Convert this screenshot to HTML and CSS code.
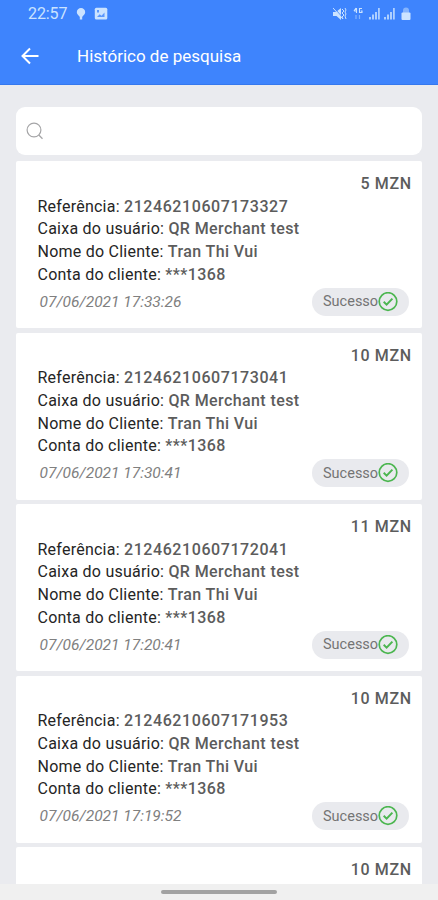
FILE: index.html
```html
<!DOCTYPE html>
<html lang="pt">
<head>
<meta charset="utf-8">
<title>Histórico de pesquisa</title>
<link rel="stylesheet" href="styles.css">
</head>
<body>
<header class="top">
  <div class="status">
    <span class="clock">22:57</span>
    <svg class="pin" width="10" height="14" viewBox="0 0 10 14"><path d="M5 1a4.200 4.200 0 0 0-4.200 4.200C.8 7.400 3.200 8.700 3.800 10v2.500h2.400V10C6.800 8.700 9.200 7.400 9.200 5.200A4.200 4.200 0 0 0 5 1z" fill="currentColor"/></svg>
    <svg class="photo" width="14" height="14" viewBox="0 0 14 14"><rect x=".8" y=".8" width="12.500" height="11.700" rx="1.500" fill="currentColor"/><path d="M3 10l2.700-2.800 1.800 1.500 3-3.200V10zM3 3h2v2.500H3z" fill="#3e84fd" opacity=".8"/></svg>
    <div class="signals">
      <svg width="74" height="14" viewBox="0 0 74 14" fill="currentColor">
        <path d="M0 5h3l5-4v12L3.500 9H0z"/>
        <path d="M1 1l10 11" stroke="#3e84fd" stroke-width="1"/>
        <path d="M0 1l10 11" stroke="currentColor" stroke-width="1"/>
        <path d="M9 2l2 2-2 2 2 2-2 2 1 2M12 1l1 2-1 2 1 2-1 2 1 3" fill="none" stroke="currentColor" stroke-width="1"/>
        <path d="M23.500 1v5M21 4h3M21 4l2-3M29 1.500h-2.500v4H29V4h-1.200" fill="none" stroke="currentColor" stroke-width="1.100"/>
        <path d="M23 8v4M26.500 8v4" stroke="currentColor" stroke-width="1.200" opacity=".5"/>
        <path d="M36 10h2v2.500h-2zM39 7.500h2v5h-2zM42 5h2v7.500h-2zM45 1h1.800v11.500H45zM51 10h2v2.500h-2zM54 7.500h2v5h-2zM57 5h2v7.500h-2zM60 1h1.800v11.500H60z" opacity=".8"/>
      </svg>
      <svg class="lock" width="10" height="14" viewBox="0 0 10 14"><path d="M2 6V3.500a3 3 0 0 1 6 0V6" fill="currentColor" opacity=".5"/><rect x=".5" y="5.500" width="9" height="7.500" rx="1" fill="currentColor"/></svg>
    </div>
  </div>
  <div class="bar">
    <svg class="back" width="20" height="18" viewBox="0 0 20 18"><path d="M18.500 9H2.500M10 1.500L2.500 9l7.500 7.500" fill="none" stroke="#fff" stroke-width="2"/></svg>
    <h1 class="title">Histórico de pesquisa</h1>
  </div>
</header>
<main class="content">
  <div class="search">
    <svg width="18" height="18" viewBox="0 0 18 18"><circle cx="8" cy="8" r="6.900" fill="none" stroke="#a5a5a7" stroke-width="1.200"/><path d="M12.800 13l3.700 3.700" stroke="#a5a5a7" stroke-width="1.300"/></svg>
  </div>
  <section class="list" id="list"></section>
</main>
<footer class="nav"><div class="handle"></div></footer>
<template id="card">
  <article class="card">
    <div class="amount"></div>
    <div class="row ref">Referência: <b></b></div>
    <div class="row box">Caixa do usuário: <b>QR Merchant test</b></div>
    <div class="row name">Nome do Cliente: <b>Tran Thi Vui</b></div>
    <div class="row account">Conta do cliente: <b>***1368</b></div>
    <div class="foot">
      <time class="date"></time>
      <span class="pill"><span class="state">Sucesso</span><svg width="20" height="20" viewBox="0 0 20 20" fill="none" stroke="#4cb650"><circle cx="10" cy="9.500" r="8.800" stroke-width="1.700"/><path d="M5.700 9.800l2.900 2.800 5.800-6" stroke-width="2"/></svg></span>
    </div>
  </article>
</template>
<script src="app.js"></script>
</body>
</html>
```
FILE: styles.css
```css
* { box-sizing: border-box; }
body {
  margin: 0;
  height: 900px;
  overflow: hidden;
  display: flex;
  flex-direction: column;
  background: #eaebef;
  font-family: Roboto, "Liberation Sans", sans-serif;
}
.top {
  flex: none;
  height: 85px;
  background: #3e84fd;
  border-bottom: 1px solid #3578ee;
  color: #fff;
}
.status {
  display: flex;
  align-items: center;
  height: 27px;
  padding: 0 27px 0 28px;
  color: #cbe3ff;
}
.clock { width: 48px; font-size: 16px; letter-spacing: -0.1px; }
.photo { margin-left: 8px; }
.signals { display: flex; margin-left: auto; }
.lock { margin-left: -6px; }
.bar { display: flex; align-items: center; height: 58px; padding-left: 20px; }
.back { margin-right: 37px; }
.title { margin: 0; font-size: 17px; font-weight: 400; line-height: 20px; }
.content { flex: 1; min-height: 0; padding: 22px 16px 0; overflow: hidden; }
.search {
  display: flex;
  align-items: center;
  height: 48px;
  margin-bottom: 6px;
  padding-left: 10px;
  border-radius: 9px;
  background: #fff;
}
.list { display: flex; flex-direction: column; gap: 4.5px; }
.card {
  height: 167px;
  flex: none;
  padding: 11px 11px 0 21.500px;
  border-radius: 2px;
  background: #fff;
}
.amount {
  height: 22.500px;
  line-height: 23px;
  text-align: right;
  font-size: 16px;
  font-weight: 500;
  letter-spacing: 0.6px;
  margin-right: -0.6px;
  color: #5c5c5c;
}
.row {
  height: 22.800px;
  line-height: 23px;
  font-size: 16px;
  letter-spacing: 0.24px;
  color: #252525;
  white-space: nowrap;
}
.row b { font-weight: 500; letter-spacing: 0.4px; color: #5c5c5c; }
.ref b { letter-spacing: 0.58px; }
.foot {
  display: flex;
  align-items: center;
  justify-content: space-between;
  height: 28px;
  margin-top: 2px;
  padding: 0 2px 0 2px;
}
.date { font-size: 15.500px; font-style: italic; color: #808080; }
.pill {
  display: flex;
  align-items: center;
  width: 97px;
  height: 28px;
  padding-left: 11px;
  border-radius: 14px;
  background: #e9eaee;
}
.state { width: 54.500px; font-size: 14.500px; color: #747474; white-space: nowrap; }
.nav {
  flex: none;
  height: 16px;
  padding-top: 6px;
  background: #f0f0f0;
}
.handle { width: 116px; height: 4px; margin: 0 auto; border-radius: 2px; background: #a2a2a2; }
```
FILE: app.js
```js
const entries = [
  ["5 MZN", "21246210607173327", "07/06/2021 17:33:26"],
  ["10 MZN", "21246210607173041", "07/06/2021 17:30:41"],
  ["11 MZN", "21246210607172041", "07/06/2021 17:20:41"],
  ["10 MZN", "21246210607171953", "07/06/2021 17:19:52"],
  ["10 MZN", "", ""]
];
const list = document.getElementById("list");
const template = document.getElementById("card");
for (const [amount, reference, date] of entries) {
  const card = template.content.cloneNode(true);
  card.querySelector(".amount").textContent = amount;
  if (reference) {
    card.querySelector(".ref b").textContent = reference;
    card.querySelector(".date").textContent = date;
  } else {
    card.querySelectorAll(".row, .foot").forEach((el) => el.remove());
  }
  list.append(card);
}
```
